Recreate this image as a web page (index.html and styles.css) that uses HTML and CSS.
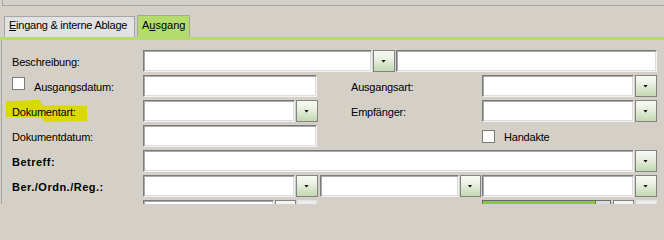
FILE: index.html
```html
<!DOCTYPE html>
<html>
<head>
<meta charset="utf-8">
<title>Ausgang</title>
<link rel="stylesheet" href="styles.css">
</head>
<body>
<div class="frame-top"></div>
<div class="tabs">
  <div class="tab"><u>E</u>ingang &amp; interne Ablage</div>
  <div class="tab active">A<u>u</u>sgang</div>
</div>
<div class="tabline"></div>
<div class="panel">
  <div class="row">
    <span class="lbl">Beschreibung:</span>
    <div class="span4 combo">
      <span class="inp w229"></span><span class="btn"><i class="arr"></i></span><span class="inp grow"></span>
    </div>
  </div>
  <div class="row">
    <div class="cbcell"><span class="cb cb-top2"></span><span class="lbl">Ausgangsdatum:</span></div>
    <span class="inp w174"></span>
    <span></span>
    <span class="lbl">Ausgangsart:</span>
    <div class="combo"><span class="inp grow"></span><span class="btn"><i class="arr"></i></span></div>
  </div>
  <div class="row">
    <span class="lbl"><span class="hl">Dokumentart:</span></span>
    <div class="combo"><span class="inp grow"></span><span class="btn"><i class="arr"></i></span></div>
    <span></span>
    <span class="lbl">Empfänger:</span>
    <div class="combo"><span class="inp grow"></span><span class="btn"><i class="arr"></i></span></div>
  </div>
  <div class="row">
    <span class="lbl">Dokumentdatum:</span>
    <span class="inp w174"></span>
    <span></span>
    <span></span>
    <div class="cbcell"><span class="cb cb-top5"></span><span class="lbl">Handakte</span></div>
  </div>
  <div class="row">
    <span class="lbl bold">Betreff:</span>
    <div class="span4 combo"><span class="inp grow"></span><span class="btn"><i class="arr"></i></span></div>
  </div>
  <div class="row">
    <span class="lbl bold">Ber./Ordn./Reg.:</span>
    <div class="span4 combo">
      <span class="inp w152"></span><span class="btn"><i class="arr"></i></span>
      <span class="inp w139 ml2"></span><span class="btn w21"><i class="arr"></i></span>
      <span class="inp grow"></span><span class="btn"><i class="arr"></i></span>
    </div>
  </div>
  <div class="row">
    <span></span>
    <div class="combo">
      <span class="inp w131"></span><span class="btn w21"></span><span class="lightbox w20"></span>
    </div>
    <span></span>
    <span></span>
    <div class="prowrap">
      <span class="prog"></span><span class="pbox"></span><span class="btn w21"></span><span class="lightbox w21"></span>
    </div>
  </div>
</div>
</body>
</html>
```

FILE: styles.css
```css
* { box-sizing: border-box; }
html, body { margin: 0; padding: 0; }
body {
  background: #d4d0c8;
  font-family: "Liberation Sans", Arial, sans-serif;
  font-size: 11px;
  color: #000;
  width: 664px;
  height: 204px;
  overflow: hidden;
}
.frame-top {
  height: 6px;
  margin-left: 2px;
  border-left: 1px solid #a6a6a6;
  border-bottom: 1px solid #a6a6a6;
}
.tabs {
  display: flex;
  align-items: flex-end;
  height: 31px;
  padding-left: 4px;
  gap: 2px;
}
.tab {
  border: 1px solid #a6a6a6;
  border-bottom: 0;
  background: #e2e2e2;
  height: 21px;
  width: 131px;
  padding: 0 0 0 4px;
  line-height: 17px;
  white-space: nowrap;
  letter-spacing: -0.25px;
}
.tab.active {
  background: #b4dc6c;
  height: 22px;
  width: 53px;
  line-height: 19px;
  letter-spacing: 0;
}
.tabline { height: 3px; background: #b4dc6c; }
.panel {
  margin-left: 1px;
  border-left: 1px solid #a6a6a6;
  padding: 10px 0 0 10px;
  display: flex;
  flex-direction: column;
  gap: 3px;
  height: 200px;
}
.row {
  display: grid;
  grid-template-columns: 131px 175px 33px 131px 175px;
  grid-template-rows: 22px;
  height: 22px;
  flex: none;
}
.span4 { grid-column: 2 / 6; }
.lbl {
  display: block;
  line-height: 19px;
  padding-top: 3px;
  height: 22px;
  white-space: nowrap;
  letter-spacing: -0.2px;
}
.lbl.bold { font-weight: bold; letter-spacing: 0.5px; }
.hl { position: relative; }
.hl::before {
  content: "";
  position: absolute;
  left: -6px;
  top: -6px;
  width: 81px;
  height: 22px;
  background: #d9d900;
  clip-path: polygon(0 1px, 34px 0, 36px 5px, 81px 6px, 81px 21px, 38px 22px, 36px 18px, 0 17px);
  z-index: -1;
}
.hl { z-index: 0; }
.cbcell { display: flex; align-items: flex-start; gap: 9px; }
.cb {
  width: 13px;
  height: 13px;
  background: #fff;
  border: 1px solid #7a7a7a;
  flex: none;
}
.cb-top2 { margin-top: 2px; }
.cb-top5 { margin-top: 5px; }
.combo { display: flex; gap: 1px; height: 22px; }
.inp {
  display: block;
  height: 22px;
  background: #fff;
  border: 1px solid;
  border-color: #7b7b7b #f2f2f2 #f2f2f2 #7b7b7b;
  box-shadow: inset 1px 1px 0 #a9a9a9, inset -1px -1px 0 #dcdcdc;
  flex: none;
}
.inp.grow { flex: 1; }
.w229 { width: 229px; }
.w174 { width: 174px; }
.w152 { width: 152px; }
.w139 { width: 139px; }
.w131 { width: 131px; }
.w21 { width: 21px !important; }
.w20 { width: 20px; }
.ml2 { margin-left: 1px; }
.btn {
  display: flex;
  align-items: center;
  justify-content: center;
  width: 22px;
  height: 22px;
  flex: none;
  border: 1px solid #838383;
  background: linear-gradient(#f7f9f3, #eef3e8 30%, #c3d8b1);
}
.arr {
  display: block;
  width: 5px;
  height: 3px;
  background: #000;
  clip-path: polygon(0 0, 100% 0, 50% 100%);
  margin-left: -1px;
}
.lightbox {
  display: block;
  height: 22px;
  flex: none;
  background: #ececec;
  border: 1px solid #e2e2e2;
}
.prowrap { display: flex; height: 22px; }
.prog {
  display: block;
  width: 113px;
  height: 22px;
  flex: none;
  background: #8dc63f;
  border-top: 1px solid #6a6a6a;
  border-left: 1px solid #6a6a6a;
}
.pbox {
  display: block;
  width: 16px;
  height: 22px;
  flex: none;
  margin-right: 2px;
  background: #dcdcdc;
  border: 1px solid #6a6a6a;
}
.prowrap .btn { margin-right: 2px; }
```
